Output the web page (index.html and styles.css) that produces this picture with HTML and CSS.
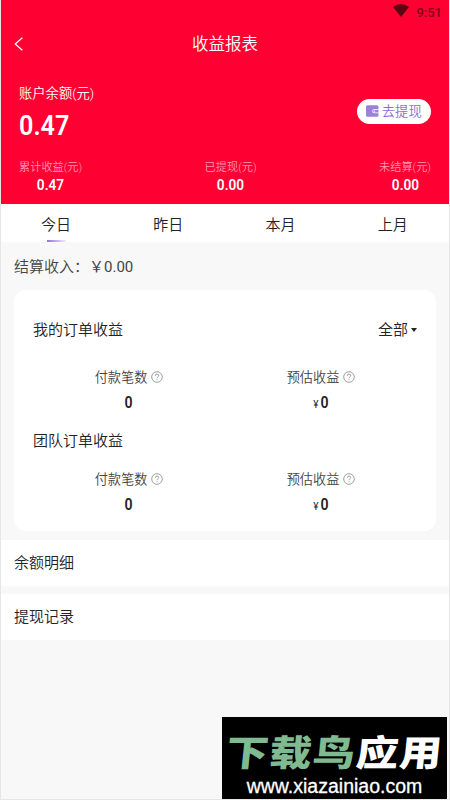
FILE: index.html
```html
<!DOCTYPE html>
<html lang="zh-CN">
<head>
<meta charset="utf-8">
<title>收益报表</title>
<link rel="stylesheet" href="styles.css">
</head>
<body>
<main class="screen">
  <header class="hero">
    <div class="status">
      <svg class="wifi" viewBox="0 0 16 13"><path d="M0 3Q8-2.8 16 3L8 13Z" fill="currentColor"/></svg>
      <span>9:51</span>
    </div>
    <nav class="nav">
      <svg class="back" viewBox="0 0 10 14"><path d="M8.4.8 1.2 7l7.2 6.3" fill="none" stroke="currentColor" stroke-width="1.2"/></svg>
      <h1 class="title">收益报表</h1>
    </nav>
    <section class="balance">
      <div>
        <div class="balance-label">账户余额(元)</div>
        <div class="balance-value"><span class="num">0.47</span></div>
      </div>
      <button class="withdraw">
        <svg class="wallet" viewBox="0 0 13 12"><path d="M1.6 0h9.8Q13 0 13 1.6V3.8H8.8a2.3 2.3 0 0 0 0 4.6H13v2Q13 12 11.4 12H1.6Q0 12 0 10.4V1.6Q0 0 1.6 0Z" fill="#9b80dc"/><path d="M13 4.6H8.9a1.5 1.5 0 0 0 0 3H13Z" fill="#9b80dc"/><circle cx="9" cy="6.1" r=".7" fill="#fff"/></svg>
        <span>去提现</span>
      </button>
    </section>
    <section class="stats">
      <div class="stat"><span class="stat-label">累计收益(元)</span><b class="stat-value">0.47</b></div>
      <div class="stat"><span class="stat-label">已提现(元)</span><b class="stat-value">0.00</b></div>
      <div class="stat"><span class="stat-label">未结算(元)</span><b class="stat-value">0.00</b></div>
    </section>
  </header>
  <nav class="tabs">
    <span class="tab active">今日</span>
    <span class="tab">昨日</span>
    <span class="tab">本月</span>
    <span class="tab">上月</span>
  </nav>
  <div class="settled">结算收入：<span class="settled-value">￥0.00</span></div>
  <section class="card">
    <div class="card-head"><h2>我的订单收益</h2><span class="filter">全部<i class="caret"></i></span></div>
    <div class="metrics first">
      <div class="metric">
        <div class="metric-label">付款笔数<svg class="help" viewBox="0 0 12 12"><circle cx="6" cy="6" r="5.3"/><path d="M4.3 4.8Q4.4 3 6 3t1.7 1.6C7.7 5.9 6 5.8 6 7.2M6 8.3v.9"/></svg></div>
        <div class="metric-value"><span class="digit">0</span></div>
      </div>
      <div class="metric">
        <div class="metric-label">预估收益<svg class="help" viewBox="0 0 12 12"><circle cx="6" cy="6" r="5.3"/><path d="M4.3 4.8Q4.4 3 6 3t1.7 1.6C7.7 5.9 6 5.8 6 7.2M6 8.3v.9"/></svg></div>
        <div class="metric-value"><small>¥</small><span class="digit">0</span></div>
      </div>
    </div>
    <div class="card-head"><h2>团队订单收益</h2></div>
    <div class="metrics">
      <div class="metric">
        <div class="metric-label">付款笔数<svg class="help" viewBox="0 0 12 12"><circle cx="6" cy="6" r="5.3"/><path d="M4.3 4.8Q4.4 3 6 3t1.7 1.6C7.7 5.9 6 5.8 6 7.2M6 8.3v.9"/></svg></div>
        <div class="metric-value"><span class="digit">0</span></div>
      </div>
      <div class="metric">
        <div class="metric-label">预估收益<svg class="help" viewBox="0 0 12 12"><circle cx="6" cy="6" r="5.3"/><path d="M4.3 4.8Q4.4 3 6 3t1.7 1.6C7.7 5.9 6 5.8 6 7.2M6 8.3v.9"/></svg></div>
        <div class="metric-value"><small>¥</small><span class="digit">0</span></div>
      </div>
    </div>
  </section>
  <div class="row">余额明细</div>
  <div class="row">提现记录</div>
  <aside class="watermark">
    <div class="brand"><span class="green">下载鸟</span>应用</div>
    <div class="site">www.xiazainiao.com</div>
  </aside>
</main>
</body>
</html>
```
FILE: styles.css
```css
* { box-sizing: border-box; }
body {
  margin: 0;
  font-family: Roboto, "Noto Sans CJK SC", sans-serif;
  font-weight: 350;
  color: #222;
}
h1, h2 { margin: 0; font-weight: inherit; }
.screen {
  position: relative;
  width: 450px;
  height: 800px;
  overflow: hidden;
  background: #f8f8f8;
  border: 1px solid #e6e6e6;
  border-top: 0;
}
.hero {
  height: 204px;
  margin: 0 -1px;
  background: #ff0032;
  color: #fff;
}
.status {
  display: flex;
  justify-content: flex-end;
  align-items: center;
  gap: 7px;
  height: 24px;
  padding-right: 8px;
  font-size: 13px;
  font-weight: 500;
  color: #7a0819;
}
.wifi { width: 16px; height: 13px; margin-top: -3px; color: #5c0613; }
.nav {
  display: grid;
  grid-template-columns: 50px 1fr 50px;
  align-items: center;
  height: 40px;
}
.back { width: 10px; height: 14px; margin-left: 14px; }
.title { padding-top: 2px; text-align: center; font-size: 16.5px; line-height: 24px; }
.balance {
  display: flex;
  justify-content: space-between;
  height: 92px;
  padding: 20px 19px 0;
}
.balance-label { font-size: 13.3px; line-height: 20px; }
.balance-value { height: 44px; font-size: 28px; line-height: 43px; font-weight: 600; }
.num { display: inline-block; transform: scaleX(.9); transform-origin: left; }
.withdraw {
  display: flex;
  align-items: center;
  justify-content: center;
  gap: 3px;
  width: 74px;
  height: 25px;
  margin-top: 14.5px;
  padding: 0;
  border: 0;
  border-radius: 13px;
  background: #fff;
  color: #8a6dd2;
  font: 350 13.3px/20px "Noto Sans CJK SC", sans-serif;
}
.wallet { width: 12.5px; height: 12px; }
.stats { display: flex; justify-content: space-between; padding: 3px 19px 0; }
.stat { display: flex; flex-direction: column; align-items: center; }
.stat-label { font-size: 11.2px; line-height: 18px; color: #ff9ab0; }
.stat-value { font-size: 14.5px; line-height: 18px; font-weight: 600; transform: scaleX(.94); }
.tabs { display: flex; height: 38px; margin: 0 0 0 -1px; background: #fff; }
.tab {
  position: relative;
  flex: 1;
  text-align: center;
  font-size: 15px;
  line-height: 42px;
}
.active::after {
  content: "";
  position: absolute;
  left: calc(50% - 9px);
  bottom: 0;
  width: 19px;
  height: 2px;
  background: linear-gradient(90deg, #9673d9, #f2ecfb);
}
.settled { height: 48px; padding-left: 13px; font-size: 15px; line-height: 51px; color: #444; }
.settled-value { font-weight: 400; color: #444; }
.card {
  height: 241px;
  margin: 0 13px 9px;
  padding-top: 26px;
  border-radius: 12px;
  background: #fff;
}
.card-head {
  display: flex;
  justify-content: space-between;
  height: 28px;
  padding: 0 19px;
  line-height: 28px;
  font-size: 15px;
}
.card-head h2 { font-size: 15px; }
.filter { display: flex; align-items: center; gap: 3px; }
.caret {
  border: 3px solid transparent;
  border-top: 4px solid #222;
  border-bottom: 0;
}
.metrics {
  display: grid;
  grid-template-columns: 192px 192px;
  justify-content: center;
  padding-top: 14px;
}
.metrics.first { height: 83px; padding-top: 23px; }
.metric { text-align: center; }
.metric-label {
  display: flex;
  justify-content: center;
  align-items: center;
  gap: 4px;
  font-size: 13.2px;
  line-height: 22px;
  color: #444;
}
.help { width: 12px; height: 12px; margin-top: -2px; fill: none; stroke: #888; stroke-width: .8; }
.metric-value { font-size: 16px; line-height: 28px; font-weight: 600; color: #222; }
.digit { display: inline-block; transform: scaleX(.88); }
.metric-value small { margin-right: 1px; font-size: 10px; font-weight: 400; }
.row {
  height: 46px;
  margin-bottom: 8px;
  padding-left: 13px;
  background: #fff;
  font-size: 15px;
  line-height: 47px;
}
.watermark {
  position: absolute;
  left: 221px;
  top: 717px;
  width: 225px;
  height: 82px;
  background: #000;
  color: #fff;
  text-align: center;
}
.brand {
  height: 54px;
  padding-top: 9px;
  font: 900 41px/50px "Noto Sans CJK SC", sans-serif;
  letter-spacing: 1px;
  white-space: nowrap;
  transform: translateX(1px) scale(1.03, .88) skewX(-5deg);
}
.green { color: #7fba91; }
.site { font: 19.5px/31px "Liberation Sans", sans-serif; -webkit-text-stroke: .3px #fff; }
```
